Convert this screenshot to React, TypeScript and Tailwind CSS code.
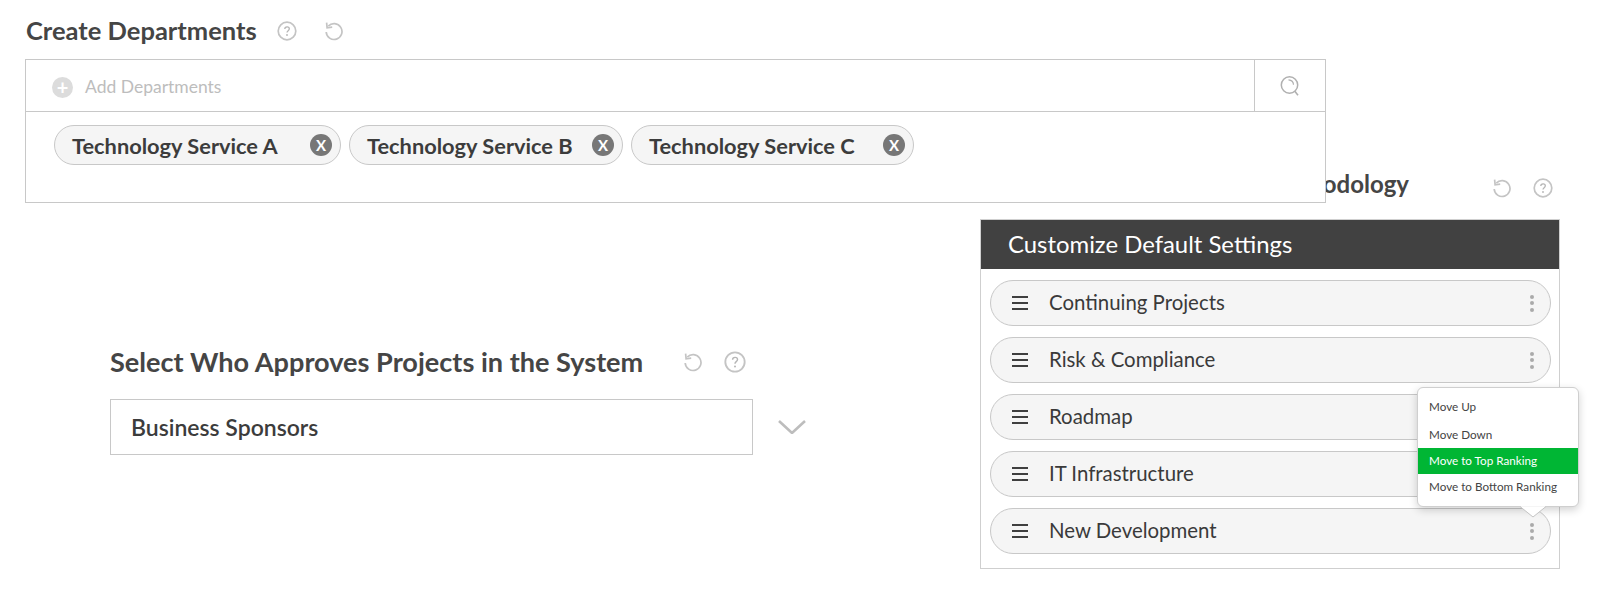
import React from "react";

const font = { fontFamily: '"Lato", "Noto Sans", sans-serif' };

function Help({ className = "" }: { className?: string }) {
  return (
    <svg viewBox="0 0 20 20" className={className} fill="none">
      <circle cx="10" cy="10" r="8.8" stroke="#c4c4c4" strokeWidth="1.7" />
      <path d="M7.8 8c0-1.4 1-2.2 2.3-2.2s2.2.8 2.2 2c0 1.9-2.3 1.9-2.3 3.8" stroke="#b5b5b5" strokeWidth="1.3" />
      <circle cx="10" cy="14" r="0.9" fill="#b5b5b5" />
    </svg>
  );
}

function Reset({ className = "" }: { className?: string }) {
  return (
    <svg viewBox="0 0 20 20" className={className} fill="none">
      <path d="M4.3 5.2A7.9 7.9 0 1 1 2.2 11" stroke="#c4c4c4" strokeWidth="1.7" />
      <path d="M2.6 1.6l.5 5.2 5.1-.6" stroke="#c4c4c4" strokeWidth="1.7" />
    </svg>
  );
}

function SearchGlyph() {
  return (
    <svg viewBox="0 0 22 22" className="w-[22px] h-[22px]" fill="none">
      <circle cx="10.5" cy="10" r="8.2" stroke="#b0b0b0" strokeWidth="1.5" />
      <path d="M9.5 4.8c3 .2 4.9 2.2 5 5" stroke="#b0b0b0" strokeWidth="1.2" />
      <path d="M15.8 16.2l3.2 4" stroke="#b0b0b0" strokeWidth="1.6" />
    </svg>
  );
}

function Chip({ label, width }: { label: string; width: string }) {
  return (
    <div className={`${width} h-[40px] flex items-center justify-between rounded-full border border-[#c8c8c8] bg-[#f5f5f5] pl-[17px] pr-[8px]`}>
      <span className="pt-[2px] text-[21.8px] font-bold text-[#3c3c3c] whitespace-nowrap">{label}</span>
      <span className="w-[22px] h-[22px] rounded-full bg-[#777777] flex items-center justify-center text-white text-[15px] font-bold leading-none">X</span>
    </div>
  );
}

function Row({ label }: { label: string }) {
  return (
    <div className="h-[46px] flex items-center rounded-full border border-[#c8c8c8] bg-[#f5f5f5] pl-[21px] pr-[16px]">
      <div className="w-[16px] flex flex-col gap-[4px]">
        <div className="h-[2px] bg-[#3f3f3f]" />
        <div className="h-[2px] bg-[#3f3f3f]" />
        <div className="h-[2px] bg-[#3f3f3f]" />
      </div>
      <span className="ml-[21px] pb-[2px] text-[20.4px] text-[#3a3a3a] whitespace-nowrap">{label}</span>
      <div className="ml-auto flex flex-col gap-[2.5px]">
        <div className="w-[4px] h-[4px] rounded-full bg-[#aaaaaa]" />
        <div className="w-[4px] h-[4px] rounded-full bg-[#aaaaaa]" />
        <div className="w-[4px] h-[4px] rounded-full bg-[#aaaaaa]" />
      </div>
    </div>
  );
}

export default function App() {
  return (
    <div className="w-[1600px] h-[610px] overflow-hidden bg-white" style={font}>
      <div className="pl-[25px]">
        <div className="h-[59px] flex items-center pt-[2px] pl-px">
          <h1 className="text-[25.5px] font-bold text-[#454545] whitespace-nowrap">Create Departments</h1>
          <Help className="ml-[20px] w-[20px] h-[20px]" />
          <Reset className="ml-[27px] w-[20px] h-[20px]" />
        </div>
        <div className="relative z-10 w-[1301px] h-[144px] border border-[#c8c8c8] bg-white">
          <div className="h-[52px] flex border-b border-[#c8c8c8]">
            <div className="flex-1 flex items-center pl-[26px] pt-[3px]">
              <span className="w-[21px] h-[21px] rounded-full bg-[#dcdcdc] flex items-center justify-center text-white text-[20px] font-bold leading-none">+</span>
              <span className="ml-[12px] text-[17.5px] text-[#bdbdbd]">Add Departments</span>
            </div>
            <div className="w-[71px] border-l border-[#c8c8c8] flex items-center justify-center">
              <SearchGlyph />
            </div>
          </div>
          <div className="flex pl-[28px] pt-[13px] gap-[8px]">
            <Chip label="Technology Service A" width="w-[287px]" />
            <Chip label="Technology Service B" width="w-[274px]" />
            <Chip label="Technology Service C" width="w-[283px]" />
          </div>
        </div>
      </div>

      <div className="flex">
        <div className="ml-[110px] pt-[143px]">
          <div className="h-[32px] flex items-center">
            <h2 className="text-[27.1px] font-bold text-[#454545] whitespace-nowrap">Select Who Approves Projects in the System</h2>
            <Reset className="ml-[40px] w-[20px] h-[20px]" />
            <Help className="ml-[21px] w-[22px] h-[22px]" />
          </div>
          <div className="mt-[21px] flex items-center">
            <div className="w-[643px] h-[56px] border border-[#c8c8c8] flex items-center pl-[20px] text-[23px] font-semibold text-[#3c3c3c]">
              Business Sponsors
            </div>
            <svg viewBox="0 0 28 14" className="ml-[25px] w-[28px] h-[14px]" fill="none">
              <path d="M1 1l13 12L27 1" stroke="#bdbdbd" strokeWidth="2.6" />
            </svg>
          </div>
        </div>

        <div className="ml-auto mr-[40px] w-[580px] -mt-[39px]">
          <div className="h-[55px] flex items-center relative pb-[8px]">
            <span className="absolute left-[208px] top-[2px] text-[24px] font-bold text-[#454545] whitespace-nowrap">Define Methodology</span>
            <Reset className="ml-auto w-[20px] h-[20px]" />
            <Help className="ml-[21px] mr-[7px] w-[20px] h-[20px]" />
          </div>
          <div className="relative border border-[#cfcfcf] h-[350px]">
            <div className="h-[49px] bg-[#414141] flex items-center pl-[27px] pb-[1px] text-[23.9px] text-white">
              Customize Default Settings
            </div>
            <div className="flex flex-col gap-[11px] pt-[11px] pl-[9px] pr-[8px]">
              <Row label="Continuing Projects" />
              <Row label="Risk & Compliance" />
              <Row label="Roadmap" />
              <Row label="IT Infrastructure" />
              <Row label="New Development" />
            </div>
            <div className="absolute left-[436px] top-[167px] w-[162px] h-[120px] rounded-[6px] border border-[#cfcfcf] bg-white shadow-[0_3px_8px_rgba(0,0,0,0.18)] text-[11.7px] text-[#444444]">
              <div className="h-[33px] pt-[4px] flex items-center pl-[11px]">Move Up</div>
              <div className="h-[27px] flex items-center pl-[11px]">Move Down</div>
              <div className="h-[26px] flex items-center pl-[11px] bg-[#00b634] text-white">Move to Top Ranking</div>
              <div className="h-[26px] flex items-center pl-[11px]">Move to Bottom Ranking</div>
              <svg viewBox="0 0 26 12" className="absolute left-[102px] top-[118px] w-[26px] h-[12px]" fill="none">
                <path d="M0 0.5L13 11L26 0.5" fill="white" stroke="#c4c4c4" />
                <path d="M1 0H25V0.6H1Z" fill="white" />
              </svg>
            </div>
          </div>
        </div>
      </div>
    </div>
  );
}
